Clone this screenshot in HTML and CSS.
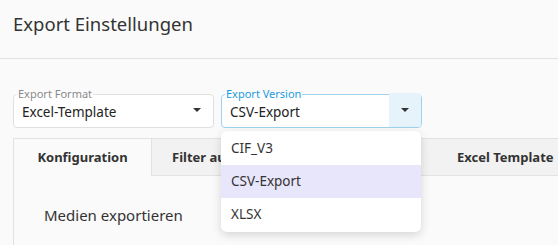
FILE: index.html
```html
<!DOCTYPE html>
<html>
<head>
<meta charset="utf-8">
<title>Export Einstellungen</title>
<link rel="stylesheet" href="styles.css">
</head>
<body>

<div class="header">
  <h1>Export Einstellungen</h1>
</div>

<div class="main">
  <div class="fields">
    <fieldset class="field">
      <legend>Export Format</legend>
      <div class="value">Excel-Template</div>
      <div class="arrow"><span class="caret"></span></div>
    </fieldset>
    <fieldset class="field open">
      <legend>Export Version</legend>
      <div class="value">CSV-Export</div>
      <div class="arrow"><span class="caret"></span></div>
    </fieldset>
  </div>

  <ul class="tabs">
    <li class="active">Konfiguration</li>
    <li><span class="clip">Filter auswahl</span></li>
    <li></li>
    <li>Excel Template</li>
  </ul>

  <div class="panel">
    <p>Medien exportieren</p>
  </div>
</div>

<ul class="menu">
  <li>CIF_V3</li>
  <li class="selected">CSV-Export</li>
  <li>XLSX</li>
</ul>

</body>
</html>
```

FILE: styles.css
```css
* {
    box-sizing: border-box;
}
body {
    margin: 0;
    background-color: #fafafa;
    font-family: "Noto Sans", "Open Sans", sans-serif;
    color: #333;
    overflow: hidden;
}
.header {
    height: 59px;
    border-bottom: 1px solid #e2e2e2;
    padding: 11px 13px 0;
}
.header h1 {
    margin: 0;
    font-size: 18.5px;
    font-weight: normal;
    color: #333;
}
.main {
    padding: 0 0 0 13px;
}
.fields {
    display: flex;
    gap: 7px;
    margin-top: 29px;
}
.field {
    position: relative;
    width: 201px;
    height: 40px;
    margin: 0;
    padding: 0 0 0 8px;
    border: 1px solid #e0e0e0;
    border-radius: 4px;
    background-color: #fff;
    display: flex;
    align-items: center;
}
.field legend {
    padding: 0 1px;
    margin-left: -5px;
    font-size: 11px;
    line-height: 12px;
    color: #8a8a8a;
}
.field .value {
    flex: 1;
    font-size: 13.5px;
    color: #222;
    margin-top: -3px;
}
.field .arrow {
    width: 32px;
    align-self: stretch;
    margin-top: -7px;
    display: flex;
    align-items: center;
    justify-content: center;
    border-radius: 0 3px 3px 0;
}
.caret {
    width: 0;
    height: 0;
    border-left: 4px solid transparent;
    border-right: 4px solid transparent;
    border-top: 4px solid #333;
    margin-top: 0;
}
.field.open {
    border-color: #9fd2ef;
}
.field.open legend {
    color: #1b9be0;
}
.field.open .arrow {
    background-color: #e6f3fb;
}
.tabs {
    list-style-type: none;
    margin: 10px 0 0;
    padding: 0;
    display: flex;
    border-top: 1px solid #e2e2e2;
    height: 38px;
}
.tabs li {
    flex: 0 0 142.5px;
    height: 37px;
    line-height: 36px;
    padding-left: 20px;
    font-size: 13px;
    font-weight: bold;
    color: #333;
    background-color: #f2f2f2;
    border-bottom: 1px solid #e2e2e2;
    white-space: nowrap;
}
.tabs li.active {
    flex-basis: 139px;
    padding-left: 0;
    text-align: center;
    background-color: #fafafa;
    border-left: 1px solid #e2e2e2;
    border-right: 1px solid #e2e2e2;
    border-bottom: none;
}
.tabs .clip {
    display: inline-block;
    width: 49px;
    overflow: hidden;
    vertical-align: top;
}
.panel {
    border-left: 1px solid #e2e2e2;
    height: 80px;
    padding: 29px 0 0 30px;
}
.panel p {
    margin: 0;
    font-size: 15px;
    color: #333;
}
.menu {
    position: absolute;
    left: 221px;
    top: 131px;
    width: 200px;
    margin: 0;
    padding: 1px 0;
    list-style-type: none;
    background-color: #fff;
    border-radius: 6px;
    box-shadow: 0 3px 10px rgba(0, 0, 0, 0.15);
}
.menu li {
    height: 33px;
    line-height: 32px;
    padding-left: 10px;
    font-size: 13.5px;
    color: #333;
}
.menu li.selected {
    background-color: #e8e6fb;
}
```
